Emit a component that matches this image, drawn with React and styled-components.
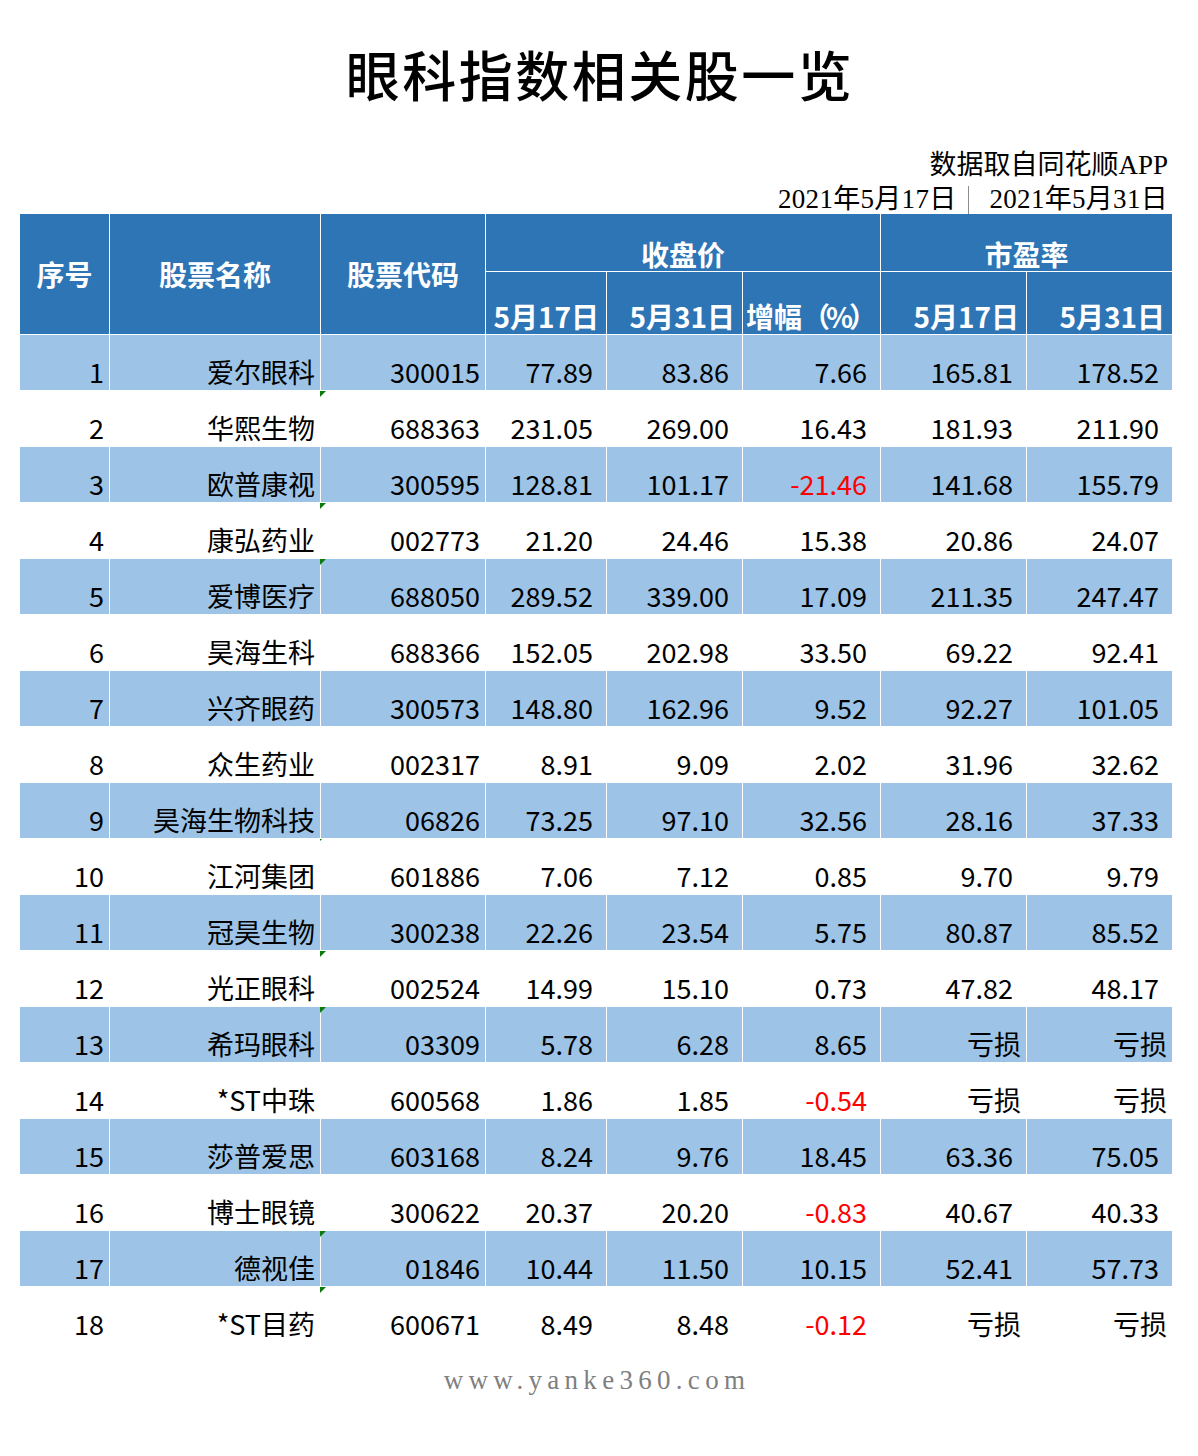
import React from 'react';
import styled, { createGlobalStyle } from 'styled-components';

const GlobalStyle = createGlobalStyle`
  html, body {
    margin: 0;
    padding: 0;
    background: #fff;
  }
`;

const Page = styled.div`
  width: 1198px;
  min-height: 1456px;
  background: #fff;
`;

const Title = styled.h1`
  margin: 0;
  padding: 42px 0 0 2px;
  font-family: "Noto Sans CJK SC", sans-serif;
  font-size: 54px;
  line-height: 64px;
  font-weight: 500;
  letter-spacing: 2.5px;
  text-align: center;
  color: #000;
`;

const Note = styled.div`
  width: 1148px;
  height: 66px;
  margin: 42px 0 0 20px;
  padding-right: 4px;
  font-family: "Liberation Serif", "Noto Sans CJK SC", serif;
  font-size: 27px;
  line-height: 34px;
  text-align: right;
  color: #000;
`;

const NoteLine = styled.div`
  white-space: nowrap;
  letter-spacing: ${(p) => (p.$spaced ? '0.3px' : '0')};
`;

const Divider = styled.span`
  display: inline-block;
  width: 1px;
  height: 28px;
  margin: 0 21px 0 11px;
  background: #8c8c8c;
  vertical-align: -6px;
`;

const Sheet = styled.div`
  display: grid;
  grid-template-columns: 89px 210px 164px 120px 135px 137px 145px 145px;
  grid-template-rows: 57px 62px;
  grid-auto-rows: 55px;
  gap: 1px;
  width: max-content;
  margin-left: 20px;
  background: #fff;
`;

const HeadCell = styled.div`
  grid-row: ${(p) => (p.$tall ? 'span 2' : 'auto')};
  grid-column: ${(p) => (p.$span ? `span ${p.$span}` : 'auto')};
  display: flex;
  align-items: ${(p) => (p.$tall ? 'center' : 'flex-end')};
  justify-content: ${(p) => (p.$right ? 'flex-end' : 'center')};
  padding: 0 ${(p) => (p.$right ? '7px' : '0')} ${(p) => (p.$tall ? '0' : p.$right ? '4px' : '3px')} 0;
  background: #2e75b6;
  color: #fff;
  font-family: "Noto Sans CJK SC", sans-serif;
  font-size: 28px;
  line-height: 28px;
  font-weight: 700;
  white-space: nowrap;
`;

const Paren = styled.span`
  letter-spacing: -4px;
`;

const Cell = styled.div`
  position: relative;
  display: flex;
  align-items: flex-end;
  justify-content: flex-end;
  padding: 0 ${(p) => (p.$num ? '13px' : '5px')} 5px 0;
  background: ${(p) => (p.$band ? '#9dc3e6' : '#fff')};
  color: ${(p) => (p.$neg ? '#ff0000' : '#000')};
  font-family: "Noto Sans CJK SC", sans-serif;
  font-size: 27px;
  line-height: 27px;
  white-space: nowrap;

  &::before {
    content: ${(p) => (p.$mark ? '""' : 'none')};
    position: absolute;
    top: 0;
    left: -1px;
    width: 0;
    height: 0;
    border-top: ${(p) => p.$mark || 0}px solid #0b7a0b;
    border-right: ${(p) => p.$mark || 0}px solid transparent;
  }
`;

const Footer = styled.div`
  margin-top: 21px;
  padding-right: 4px;
  font-family: "Liberation Serif", serif;
  font-size: 27px;
  line-height: 34px;
  letter-spacing: 5.3px;
  text-align: center;
  color: #7f7f7f;
`;

// [序号, 名称, 代码, 收盘5/17, 收盘5/31, 增幅, PE 5/17, PE 5/31, 角标]
const rows = [
  [1, '爱尔眼科', '300015', '77.89', '83.86', '7.66', '165.81', '178.52', 0],
  [2, '华熙生物', '688363', '231.05', '269.00', '16.43', '181.93', '211.90', 6],
  [3, '欧普康视', '300595', '128.81', '101.17', '-21.46', '141.68', '155.79', 0],
  [4, '康弘药业', '002773', '21.20', '24.46', '15.38', '20.86', '24.07', 6],
  [5, '爱博医疗', '688050', '289.52', '339.00', '17.09', '211.35', '247.47', 6],
  [6, '昊海生科', '688366', '152.05', '202.98', '33.50', '69.22', '92.41', 0],
  [7, '兴齐眼药', '300573', '148.80', '162.96', '9.52', '92.27', '101.05', 0],
  [8, '众生药业', '002317', '8.91', '9.09', '2.02', '31.96', '32.62', 0],
  [9, '昊海生物科技', '06826', '73.25', '97.10', '32.56', '28.16', '37.33', 0],
  [10, '江河集团', '601886', '7.06', '7.12', '0.85', '9.70', '9.79', 2],
  [11, '冠昊生物', '300238', '22.26', '23.54', '5.75', '80.87', '85.52', 0],
  [12, '光正眼科', '002524', '14.99', '15.10', '0.73', '47.82', '48.17', 6],
  [13, '希玛眼科', '03309', '5.78', '6.28', '8.65', '亏损', '亏损', 6],
  [14, '*ST中珠', '600568', '1.86', '1.85', '-0.54', '亏损', '亏损', 0],
  [15, '莎普爱思', '603168', '8.24', '9.76', '18.45', '63.36', '75.05', 0],
  [16, '博士眼镜', '300622', '20.37', '20.20', '-0.83', '40.67', '40.33', 0],
  [17, '德视佳', '01846', '10.44', '11.50', '10.15', '52.41', '57.73', 6],
  [18, '*ST目药', '600671', '8.49', '8.48', '-0.12', '亏损', '亏损', 6],
];

const isNumber = (v) => /^-?\d/.test(v);

const App = () => (
  <Page>
    <GlobalStyle />
    <Title>眼科指数相关股一览</Title>

    <Note>
      <NoteLine>数据取自同花顺APP</NoteLine>
      <NoteLine $spaced>
        2021年5月17日<Divider />2021年5月31日
      </NoteLine>
    </Note>

    <Sheet>
      <HeadCell $tall>序号</HeadCell>
      <HeadCell $tall>股票名称</HeadCell>
      <HeadCell $tall>股票代码</HeadCell>
      <HeadCell $span={3}>收盘价</HeadCell>
      <HeadCell $span={2}>市盈率</HeadCell>
      <HeadCell $right>5月17日</HeadCell>
      <HeadCell $right>5月31日</HeadCell>
      <HeadCell $right>
        增幅<Paren>（%）</Paren>
      </HeadCell>
      <HeadCell $right>5月17日</HeadCell>
      <HeadCell $right>5月31日</HeadCell>

      {rows.map(([no, name, code, c1, c2, pct, pe1, pe2, mark]) => {
        const band = no % 2 === 1;
        return (
          <React.Fragment key={no}>
            <Cell $band={band}>{no}</Cell>
            <Cell $band={band}>{name}</Cell>
            <Cell $band={band} $mark={mark}>{code}</Cell>
            <Cell $band={band} $num>{c1}</Cell>
            <Cell $band={band} $num>{c2}</Cell>
            <Cell $band={band} $num $neg={pct.startsWith('-')}>{pct}</Cell>
            <Cell $band={band} $num={isNumber(pe1)}>{pe1}</Cell>
            <Cell $band={band} $num={isNumber(pe2)}>{pe2}</Cell>
          </React.Fragment>
        );
      })}
    </Sheet>

    <Footer>www.yanke360.com</Footer>
  </Page>
);

export default App;
